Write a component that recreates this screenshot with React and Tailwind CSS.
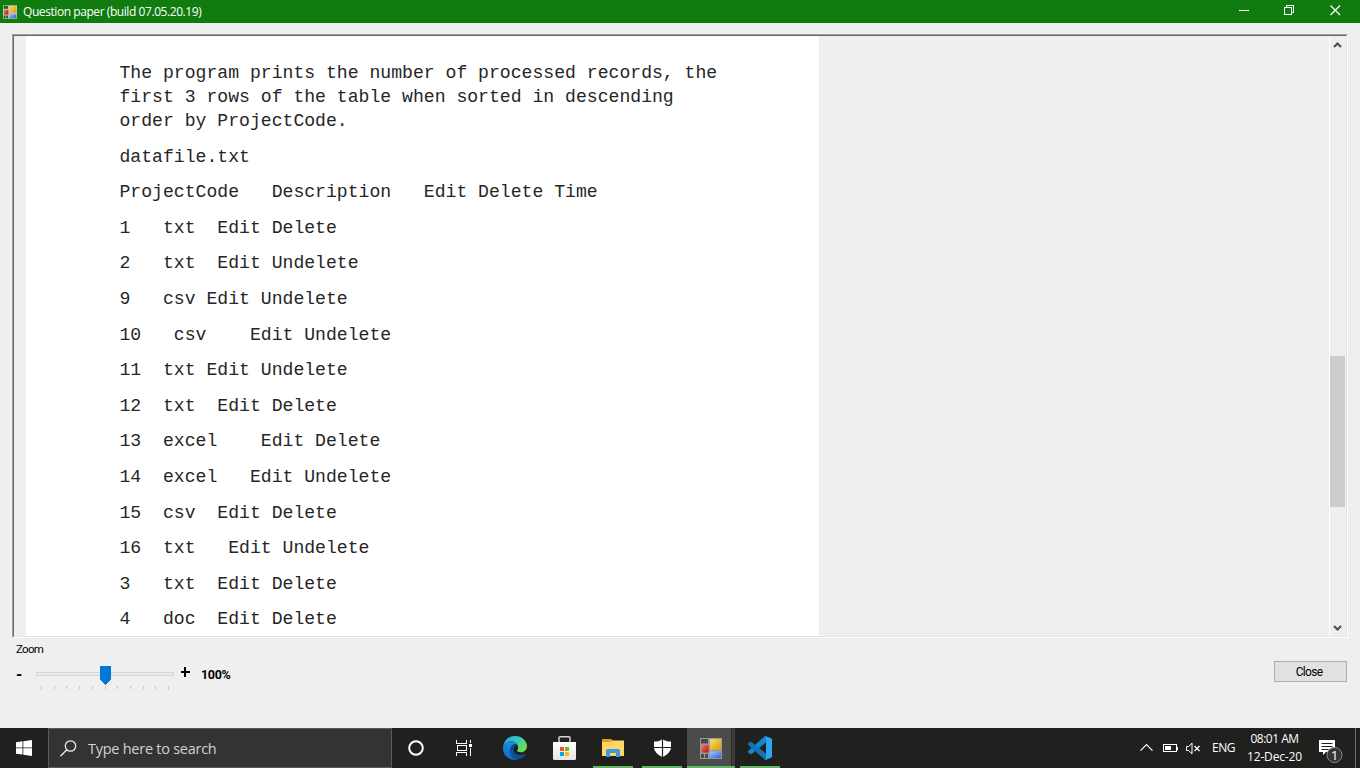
import React from "react";

const ROWS = [
  "datafile.txt",
  "ProjectCode   Description   Edit Delete Time",
  "1   txt  Edit Delete",
  "2   txt  Edit Undelete",
  "9   csv Edit Undelete",
  "10   csv    Edit Undelete",
  "11  txt Edit Undelete",
  "12  txt  Edit Delete",
  "13  excel    Edit Delete",
  "14  excel   Edit Undelete",
  "15  csv  Edit Delete",
  "16  txt   Edit Undelete",
  "3   txt  Edit Delete",
  "4   doc  Edit Delete",
];

function FormIcon({ className, dim }) {
  const gap = dim ? "#4a4a4a" : "#1b6b1b";
  return (
    <svg className={className} viewBox="0 0 22 21">
      <defs>
        <linearGradient id="fy" x1="0" y1="0" x2="1" y2="1">
          <stop offset="0" stopColor="#f8dc70" />
          <stop offset="1" stopColor="#dc9c00" />
        </linearGradient>
        <linearGradient id="fr" x1="0" y1="0" x2="1" y2="1">
          <stop offset="0" stopColor="#f08078" />
          <stop offset="1" stopColor="#c00808" />
        </linearGradient>
        <linearGradient id="fb" x1="0" y1="0" x2="1" y2="1">
          <stop offset="0" stopColor="#a8c8ff" />
          <stop offset="1" stopColor="#2a5ed8" />
        </linearGradient>
      </defs>
      <rect width="22" height="21" fill={dim ? "#9a9a9a" : "#c8c8c8"} />
      <rect x="1" y="1" width="7" height="4.5" fill={gap} />
      <rect x="1.5" y="7" width="7" height="7.5" fill="url(#fr)" />
      <rect x="10" y="1" width="11" height="11" fill="url(#fy)" />
      <rect x="10" y="13.5" width="11" height="6.5" fill="url(#fb)" />
      <rect x="1" y="16" width="3" height="4" fill={gap} />
      <rect x="5" y="16" width="3" height="4" fill={gap} />
    </svg>
  );
}

function TitleBar() {
  return (
    <header className="flex h-[23px] shrink-0 items-center bg-[#107c10] text-white">
      <FormIcon className="ml-[3px] h-[14px] w-[14px]" />
      <span className="ml-[6px] whitespace-pre font-['Open_Sans',sans-serif] text-[12px] leading-[23px] tracking-[-0.430px]">
        Question paper (build 07.05.20.19)
      </span>
      <svg className="ml-auto h-[23px] w-[130px]" viewBox="0 0 130 23" fill="none" stroke="#fff" shapeRendering="crispEdges">
        <path d="M9 10.5h10" />
        <path d="M54.5 7.5h7v7h-7zM56.5 7.5v-2h7v7h-2" />
        <path d="M100.5 5.500l9.500 9.500M110 5.500l-9.500 9.500" shapeRendering="auto" strokeWidth="1.2" />
      </svg>
    </header>
  );
}

function Document() {
  return (
    <div className="flex h-[604px] w-[1336px] border-b border-l border-r border-t border-b-white border-l-[#a0a0a0] border-r-white border-t-[#a0a0a0]">
      <div className="flex w-full overflow-hidden border border-b-[#e3e3e3] border-l-[#696969] border-r-[#e3e3e3] border-t-[#696969]">
        <article className="ml-[12px] w-[793px] overflow-hidden bg-white pl-[93.500px] pt-[25px] font-['Liberation_Mono',monospace] text-[18.120px] leading-[24px] text-[#262626]">
          <p className="mb-[11.600px] whitespace-pre">
            {"The program prints the number of processed records, the\nfirst 3 rows of the table when sorted in descending\norder by ProjectCode."}
          </p>
          {ROWS.map((r) => (
            <p key={r} className="mb-[11.600px] whitespace-pre">{r}</p>
          ))}
        </article>
        <div className="ml-auto flex w-[17px] flex-col items-start border-l border-white">
          <svg className="h-[17px] w-[15px]" viewBox="0 0 15 17" fill="none" stroke="#505050" strokeWidth="2.200">
            <path d="M4 11l3.500-3.500L11 11" />
          </svg>
          <div className="mt-[303px] h-[151px] w-[15px] bg-[#cdcdcd]" />
          <svg className="mt-auto h-[17px] w-[15px]" viewBox="0 0 15 17" fill="none" stroke="#505050" strokeWidth="2.200">
            <path d="M4 7l3.500 3.500L11 7" />
          </svg>
        </div>
      </div>
    </div>
  );
}

function ZoomControls() {
  return (
    <div className="flex h-[90px] items-start justify-between font-['Roboto',sans-serif] text-black">
      <div className="pl-[4px] pt-[3px]">
        <div className="text-[11.500px] leading-[16px] tracking-[-0.700px]">Zoom</div>
        <div className="flex items-start pt-[7px]">
          <span className="w-[14px] text-[16px] font-bold leading-[22px]">-</span>
          <svg className="h-[28px] w-[150px]" viewBox="0 0 150 28" shapeRendering="crispEdges">
            <rect x="6.500" y="8.500" width="137" height="3" fill="#e7eaea" stroke="#d6d6d6" />
            <path d="M11.500 22v4M24.500 22v3M36.500 22v3M49.500 22v3M62.500 22v3M75.500 22v3M87.500 22v3M100.500 22v3M113.500 22v3M125.500 22v3M138.500 22v4" stroke="#c4c4c4" />
            <path d="M70 2h11v13l-5.500 6L70 15z" fill="#0078d7" />
          </svg>
          <svg className="mt-[3px] h-[10px] w-[10px]" viewBox="0 0 10 10" shapeRendering="crispEdges">
            <path d="M0.500 4h9v2h-9zM4 0h2v10H4z" />
          </svg>
          <span className="ml-[11px] pt-[2px] text-[12.500px] font-bold leading-[18px] tracking-[-0.300px]">100%</span>
        </div>
      </div>
      <button className="mr-px mt-[23px] h-[21px] w-[73px] border border-[#adadad] bg-[#e1e1e1] pr-[3px] pt-px text-[12px] leading-[18px] tracking-[-0.700px]">
        Close
      </button>
    </div>
  );
}

function EdgeIcon() {
  return (
    <svg className="h-[24px] w-[24px]" viewBox="0 0 24 24">
      <defs>
        <linearGradient id="e1" x1="0" y1="0" x2="1" y2="0.500">
          <stop offset="0" stopColor="#2aa8e8" />
          <stop offset="0.500" stopColor="#30c5cc" />
          <stop offset="1" stopColor="#68de4c" />
        </linearGradient>
        <linearGradient id="e2" x1="0" y1="0" x2="0" y2="1">
          <stop offset="0" stopColor="#1c93e0" />
          <stop offset="1" stopColor="#1163b8" />
        </linearGradient>
      </defs>
      <path d="M0.200 11C0.800 4.500 5.800 0 12 0c7 0 12 5 12 10.300 0 3.700-3 6-6 6-2.600 0-4-0.900-4-1.700 0-0.700 1.100-1.100 1.100-3.200C15.100 7.800 12 5.200 8 5.200 4 5.200 1 7.800 0.200 11z" fill="url(#e1)" />
      <path d="M0.100 12C0.500 8 4 5.200 8 5.200c3.500 0 6 1.700 6.900 4.200-1-1.200-2.800-1.500-4.300-.9-2.900 1.200-3.900 5.100-2.600 8.700 1.100 3.100 3.500 5.500 6.500 6.400C7 25.300-.6 20 .1 12z" fill="url(#e2)" />
      <path d="M10.600 8.500C6 11 6 18 9.500 21.200c3.800 3.500 10 2.500 13.100-2.600.3-.5-.1-.8-.6-.5-5 2.400-11.600.2-11.600-4.900 0-1.700 1-3 2.400-3.800-.7-.9-1.500-1.100-2.200-.9z" fill="#0c4f9b" />
    </svg>
  );
}

function AppSlot({ active, running, children }) {
  return (
    <div
      className={
        "flex h-full w-[48px] flex-col items-center " +
        (active ? "bg-[#4b4b4a] shadow-[inset_-3px_0_0_#3c3c3b,inset_-4px_0_0_#2a2a29]" : "")
      }
    >
      <div className="flex h-[38px] w-full items-center justify-center pt-[2px]">{children}</div>
      {running && <div className={"h-[2px] bg-[#62b562] " + (active ? "w-full" : "w-[40px]")} />}
    </div>
  );
}

function Taskbar() {
  return (
    <footer className="flex h-[40px] shrink-0 bg-[#20201f] font-['Open_Sans',sans-serif] text-white">
      <div className="flex w-[48px] items-center justify-center">
        <svg className="h-[16px] w-[16px]" viewBox="0 0 16 16" fill="#fff">
          <path d="M0 2.200l6.500-.9v6.200H0zM7.300 1.200L16 0v7.500H7.300zM0 8.300h6.500v6.200L0 13.700zM7.300 8.300H16V16l-8.700-1.200z" />
        </svg>
      </div>
      <div className="flex w-[344px] items-center border border-[#5b5b5b] bg-[#333333]">
        <svg className="ml-[11px] h-[17px] w-[17px]" viewBox="0 0 17 17" fill="none" stroke="#f0f0f0" strokeWidth="1.300">
          <circle cx="10.500" cy="6" r="5.200" />
          <path d="M6.800 9.800L0.500 16.200" />
        </svg>
        <span className="ml-[11px] whitespace-pre pt-px text-[14.500px] leading-[20px] tracking-[-0.260px] text-[#d2d2d2]">Type here to search</span>
      </div>
      <AppSlot>
        <svg className="h-[16px] w-[16px]" viewBox="0 0 16 16" fill="none" stroke="#fff" strokeWidth="2">
          <circle cx="8" cy="8" r="6.800" />
        </svg>
      </AppSlot>
      <AppSlot>
        <svg className="h-[16px] w-[16px]" viewBox="0 0 16 16" fill="none" stroke="#fff" shapeRendering="crispEdges">
          <path d="M0.500 0v3.500h10V0M1.500 5.500h9v5h-9zM0.500 16v-3.500h10V16M14.500 0v3M14.500 8v8" />
          <path d="M13 4h3v3h-3z" fill="#fff" stroke="none" />
        </svg>
      </AppSlot>
      <div className="flex w-[54px] items-center justify-center"><EdgeIcon /></div>
      <div className="flex w-[44px] items-center justify-center">
        <svg className="h-[24px] w-[23px]" viewBox="0 0 23 24">
          <defs>
            <linearGradient id="st" x1="0" y1="0" x2="0" y2="1">
              <stop offset="0" stopColor="#fff" />
              <stop offset="1" stopColor="#e4e4e4" />
            </linearGradient>
          </defs>
          <path d="M6 7V1.800Q6 .8 7 .8h9q1 0 1 1V7" fill="none" stroke="#d4d4d4" strokeWidth="1.500" />
          <path d="M0 6h23v16.500q0 1.500-1.500 1.500h-20Q0 24 0 22.500z" fill="url(#st)" />
          <path d="M7 11h4v4H7z" fill="#f25022" />
          <path d="M12 11h4v4h-4z" fill="#7fba00" />
          <path d="M7 16h4v4H7z" fill="#00a4ef" />
          <path d="M12 16h4v4h-4z" fill="#ffb900" />
        </svg>
      </div>
      <div className="ml-[3px] flex gap-px">
        <AppSlot running>
          <svg className="h-[18px] w-[22px]" viewBox="0 0 22 18">
            <path d="M0 0h9l1.500 1.500H22V17H0z" fill="#ffd666" />
            <path d="M0 0h9l1 1.500L9 3H0z" fill="#e8a010" />
            <path d="M4 18v-6q0-2 2-2h10q2 0 2 2v6h-4v-4H8v4z" fill="#3b9ae0" />
          </svg>
        </AppSlot>
        <AppSlot running>
          <svg className="h-[18px] w-[17px]" viewBox="0 0 17 18">
            <path d="M8.500 0C6 2 3 2.600 0 2.500V8c0 4.500 4 8 8.500 10C13 16 17 12.500 17 8V2.500C14 2.600 11 2 8.500 0z" fill="#fff" />
            <path d="M8.500 0v18M0 8.500h17" stroke="#20201f" strokeWidth="1.200" />
          </svg>
        </AppSlot>
        <AppSlot running active>
          <FormIcon dim className="h-[21px] w-[22px]" />
        </AppSlot>
        <AppSlot running>
          <svg className="h-[24px] w-[24px]" viewBox="0 0 24 24">
            <path d="M18 0v6.500L3 18.500 0 16.500v-1.300L16.500.4z" fill="#1487ca" />
            <path d="M0 7.500L2.800 5.400 18 17.500V24l-1.300-.5L0 8.700z" fill="#0f75b5" />
            <path d="M17.600 0L24 2.800v18.400L17.600 24l-1.300-.6c1 .2 1.700-.4 1.700-1.200V1.800c0-.9-.8-1.400-1.600-1.200z" fill="#2ba5ee" />
          </svg>
        </AppSlot>
      </div>
      <div className="ml-auto flex items-center">
        <svg className="h-[14px] w-[62px]" viewBox="0 0 62 14" fill="none" stroke="#fff">
          <path d="M.500 9.700L6.500 3.700l6 6" strokeWidth="1.200" />
          <path d="M23.500 3.500h13v7h-13zM37.500 5.500v3" shapeRendering="crispEdges" />
          <path d="M25 5h6v4h-6z" fill="#fff" stroke="none" />
          <path d="M46.500 5.500h2.200L52 2v11L48.700 9.500h-2.200z" />
          <path d="M54.500 5l5 5M59.500 5l-5 5" strokeWidth="1.200" />
        </svg>
        <span className="ml-[10px] w-[24px] whitespace-nowrap text-[12px] tracking-[-0.500px]">ENG</span>
        <div className="ml-[5px] flex w-[67px] flex-col items-center whitespace-nowrap text-[12px] leading-[18px]">
          <span className="tracking-[-0.500px]">08:01 AM</span>
          <span className="tracking-[-0.150px]">12-Dec-20</span>
        </div>
        <svg className="ml-[10px] mt-[4px] h-[26px] w-[26px]" viewBox="0 0 26 26">
          <path d="M1 3h16v12H8l-3 3v-3H1z" fill="#fff" />
          <path d="M3.500 6.500h11M3.500 9.500h11M3.500 12.500h7" stroke="#20201f" />
          <circle cx="16.500" cy="18" r="7.500" fill="#353535" stroke="#8a8a8a" />
          <text x="16.500" y="23" textAnchor="middle" fill="#fff" className="font-['Open_Sans',sans-serif] text-[13.500px]">1</text>
        </svg>
        <div className="ml-[11px] mr-[4px] h-[40px] w-px bg-[#6c6c6c]" />
      </div>
    </footer>
  );
}

export default function App() {
  return (
    <div className="flex h-[768px] w-[1360px] flex-col overflow-hidden bg-[#efefef]">
      <TitleBar />
      <main className="flex flex-1 flex-col pl-[12px] pr-[12px] pt-[11px]">
        <Document />
        <ZoomControls />
      </main>
      <Taskbar />
    </div>
  );
}
